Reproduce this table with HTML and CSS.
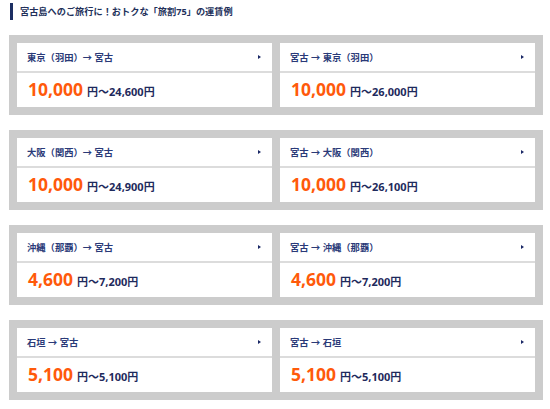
FILE: index.html
```html
<!DOCTYPE html>
<html lang="ja">
<head>
<meta charset="utf-8">
<link rel="stylesheet" href="styles.css">
</head>
<body>
<div class="page">
  <h2 class="title">宮古島へのご旅行に！おトクな「旅割75」の運賃例</h2>

  <div class="group">
    <div class="card">
      <div class="route"><span>東京（羽田）→ 宮古</span><i class="tri"></i></div>
      <div class="fare"><span class="num">10,000</span><span class="range">円～24,600円</span></div>
    </div>
    <div class="card">
      <div class="route"><span>宮古 → 東京（羽田）</span><i class="tri"></i></div>
      <div class="fare"><span class="num">10,000</span><span class="range">円～26,000円</span></div>
    </div>
  </div>

  <div class="group">
    <div class="card">
      <div class="route"><span>大阪（関西）→ 宮古</span><i class="tri"></i></div>
      <div class="fare"><span class="num">10,000</span><span class="range">円～24,900円</span></div>
    </div>
    <div class="card">
      <div class="route"><span>宮古 → 大阪（関西）</span><i class="tri"></i></div>
      <div class="fare"><span class="num">10,000</span><span class="range">円～26,100円</span></div>
    </div>
  </div>

  <div class="group">
    <div class="card">
      <div class="route"><span>沖縄（那覇）→ 宮古</span><i class="tri"></i></div>
      <div class="fare"><span class="num">4,600</span><span class="range">円～7,200円</span></div>
    </div>
    <div class="card">
      <div class="route"><span>宮古 → 沖縄（那覇）</span><i class="tri"></i></div>
      <div class="fare"><span class="num">4,600</span><span class="range">円～7,200円</span></div>
    </div>
  </div>

  <div class="group">
    <div class="card">
      <div class="route"><span>石垣 → 宮古</span><i class="tri"></i></div>
      <div class="fare"><span class="num">5,100</span><span class="range">円～5,100円</span></div>
    </div>
    <div class="card">
      <div class="route"><span>宮古 → 石垣</span><i class="tri"></i></div>
      <div class="fare"><span class="num">5,100</span><span class="range">円～5,100円</span></div>
    </div>
  </div>
</div>
</body>
</html>
```

FILE: styles.css
```css
html, body {
  margin: 0;
  padding: 0;
  background: #ffffff;
}
body {
  font-family: "Noto Sans", "Noto Sans CJK JP", sans-serif;
  color: #1f2d66;
}
.page {
  padding: 3px 7px 0 9px;
  display: flex;
  flex-direction: column;
  gap: 15px;
}
.title {
  margin: 0;
  height: 17px;
  border-left: 3px solid #1d2f63;
  margin-left: 1px;
  padding-left: 7px;
  font-size: 9.2px;
  font-weight: bold;
  line-height: 17px;
  color: #22305a;
  white-space: nowrap;
}
.group {
  width: 534px;
  box-sizing: border-box;
  background: #cccccc;
  padding: 8px;
  display: grid;
  grid-template-columns: 1fr 1fr;
  gap: 8px;
}
.card {
  background: #ffffff;
  display: flex;
  flex-direction: column;
}
.route {
  height: 28px;
  border-bottom: 2px solid #dcdcdc;
  display: flex;
  align-items: center;
  justify-content: space-between;
  padding: 0 11px 0 10px;
  font-size: 9.3px;
  font-weight: bold;
  color: #2a3a78;
  white-space: nowrap;
}
.tri {
  width: 0;
  height: 0;
  border-top: 2.5px solid transparent;
  border-bottom: 2.5px solid transparent;
  border-left: 3.5px solid #1a2866;
}
.fare {
  height: 34px;
  display: flex;
  align-items: baseline;
  padding: 6px 0 0 11px;
  box-sizing: border-box;
  white-space: nowrap;
}
.num {
  font-size: 17.5px;
  font-weight: bold;
  color: #ff5a0a;
  line-height: 20px;
  margin-right: 4px;
}
.range {
  font-size: 11px;
  font-weight: bold;
  color: #1e2a5c;
}
```
